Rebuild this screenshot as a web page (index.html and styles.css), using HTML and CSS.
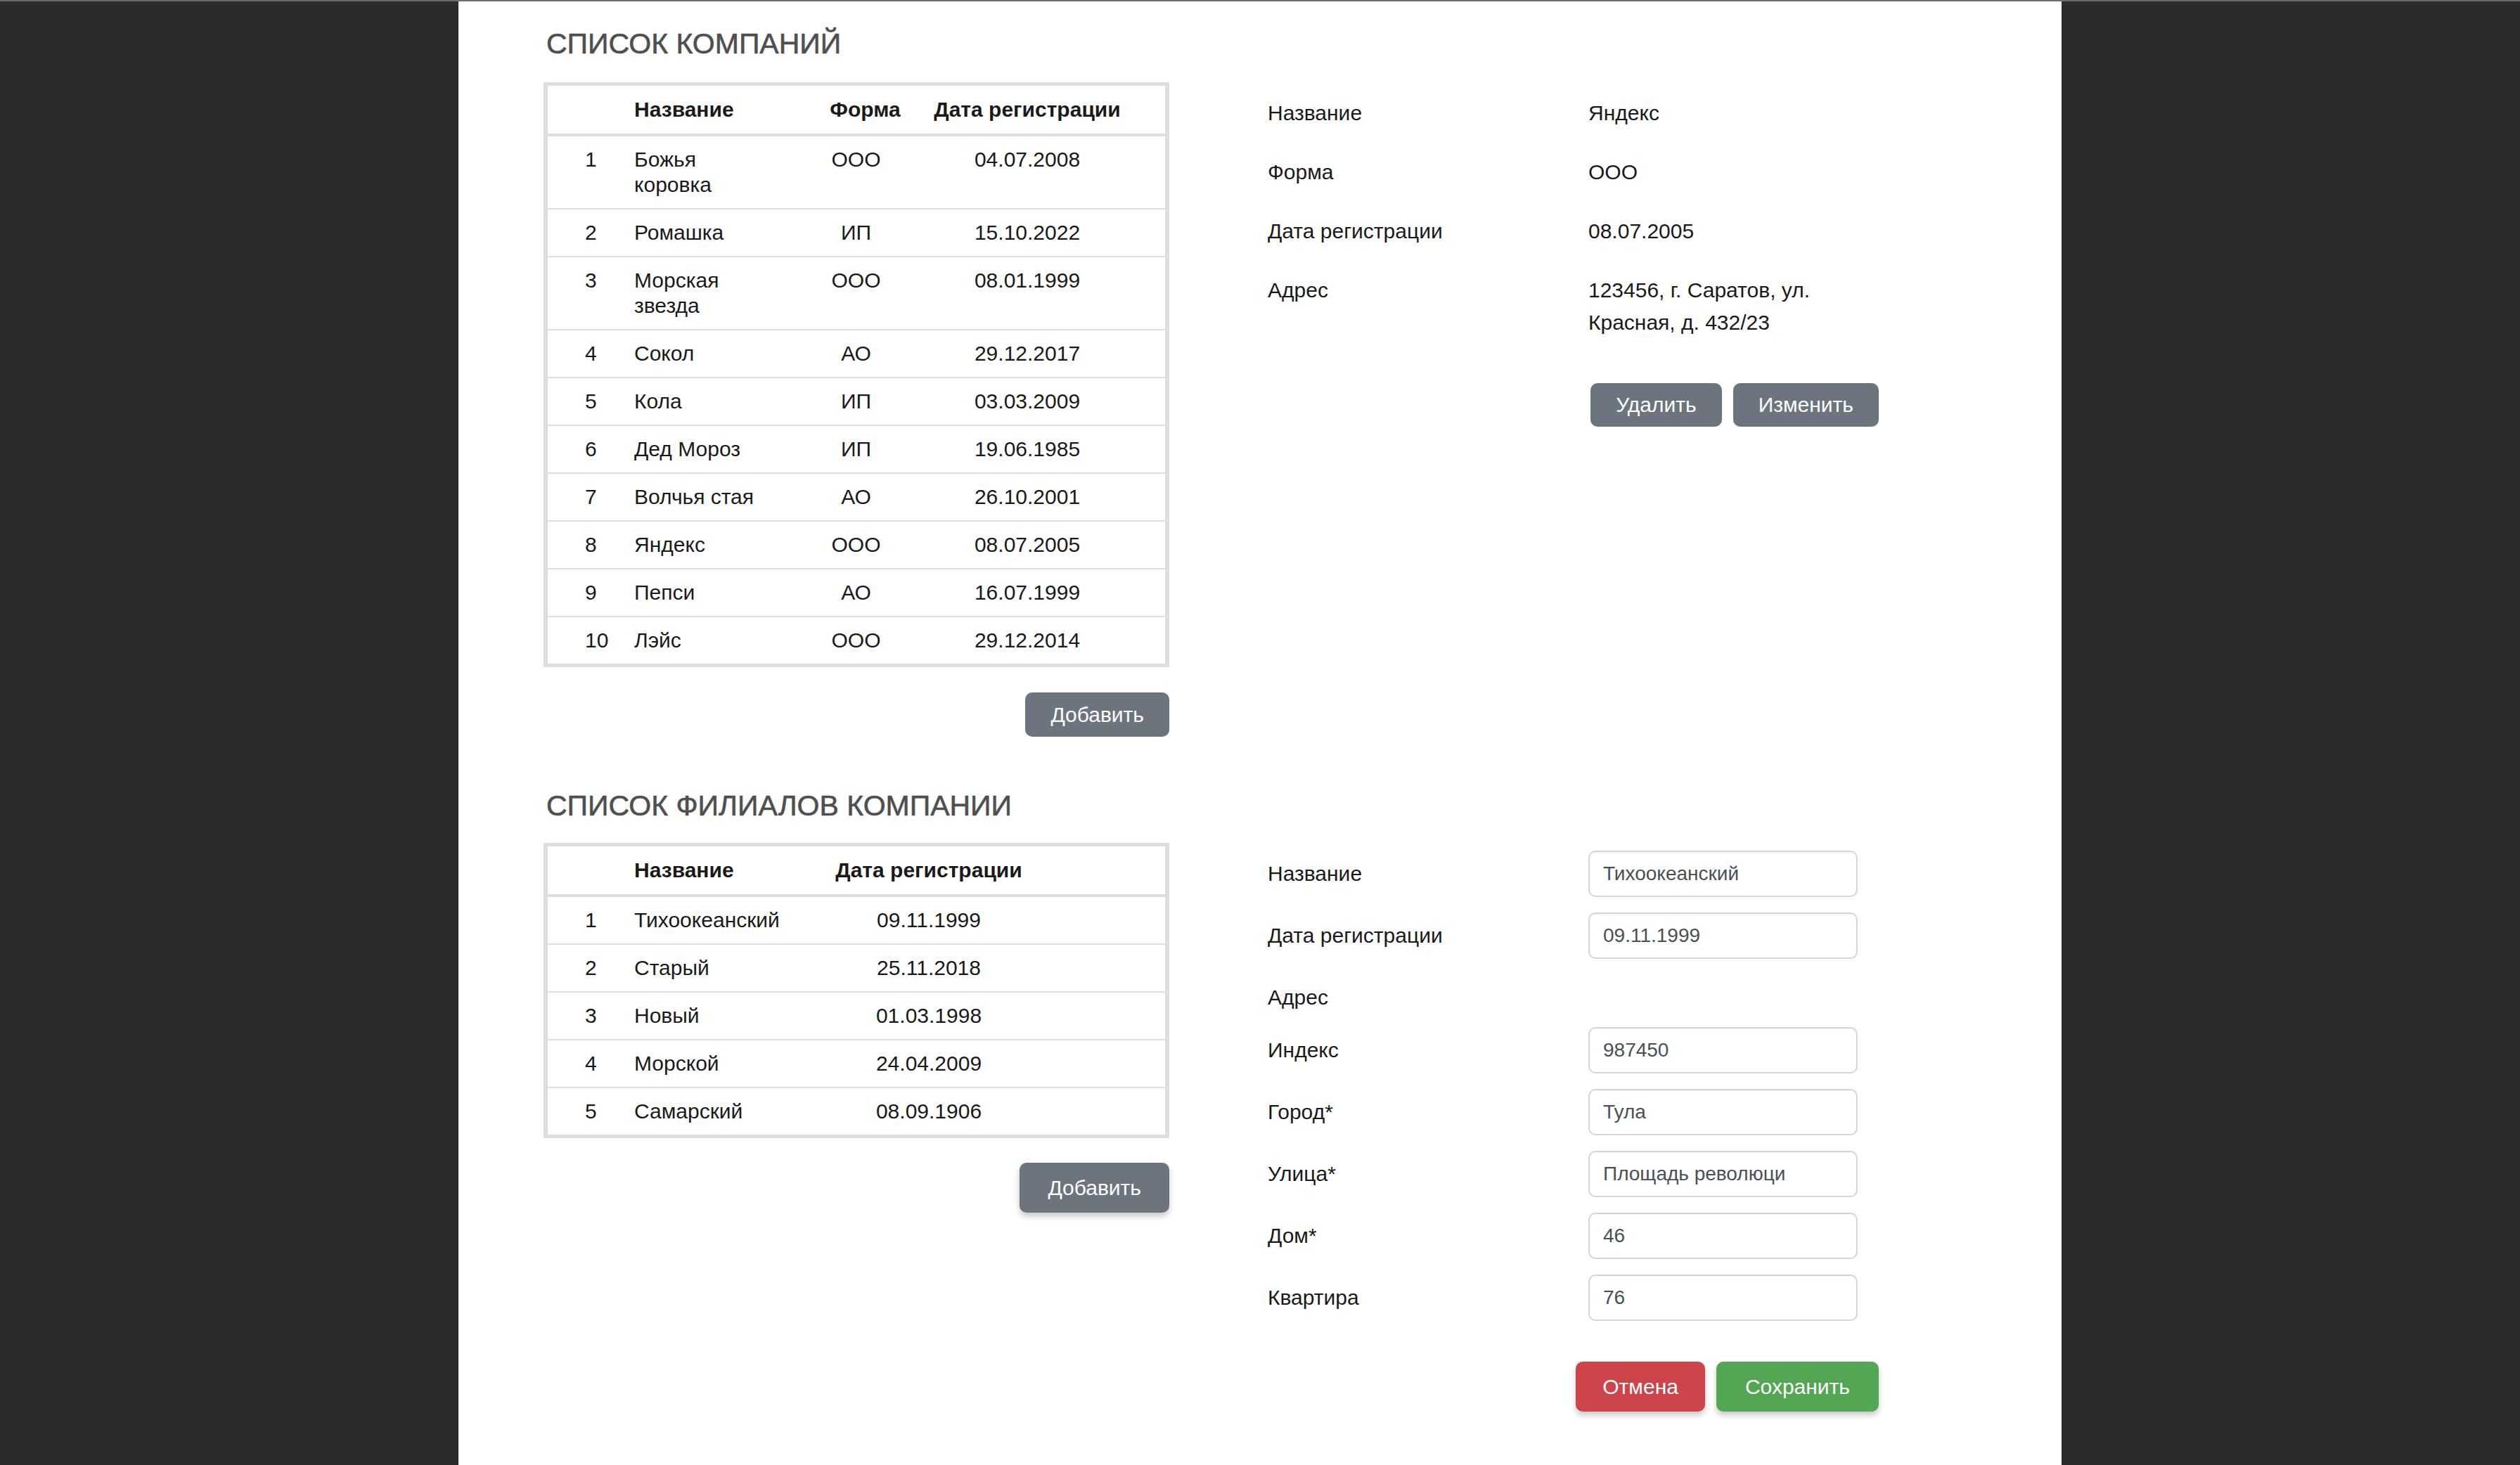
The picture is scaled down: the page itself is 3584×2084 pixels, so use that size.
FILE: index.html
```html
<!DOCTYPE html>
<html lang="ru">
<head>
<meta charset="utf-8">
<title>Список компаний</title>
<link rel="stylesheet" href="styles.css">
</head>
<body>
<div class="page">
  <h2 class="title">СПИСОК КОМПАНИЙ</h2>
  <div class="section">
    <div class="list">
      <table class="grid">
        <colgroup><col class="w-num"><col class="w-name"><col class="w-form"><col class="w-date1"></colgroup>
        <thead>
          <tr><th class="c-num"></th><th class="c-name">Название</th><th class="c-center c-formh">Форма</th><th class="c-center c-date1">Дата регистрации</th></tr>
        </thead>
        <tbody>
          <tr><td class="c-num">1</td><td class="c-name">Божья коровка</td><td class="c-center">ООО</td><td class="c-center c-date1">04.07.2008</td></tr>
          <tr><td class="c-num">2</td><td class="c-name">Ромашка</td><td class="c-center">ИП</td><td class="c-center c-date1">15.10.2022</td></tr>
          <tr><td class="c-num">3</td><td class="c-name">Морская звезда</td><td class="c-center">ООО</td><td class="c-center c-date1">08.01.1999</td></tr>
          <tr><td class="c-num">4</td><td class="c-name">Сокол</td><td class="c-center">АО</td><td class="c-center c-date1">29.12.2017</td></tr>
          <tr><td class="c-num">5</td><td class="c-name">Кола</td><td class="c-center">ИП</td><td class="c-center c-date1">03.03.2009</td></tr>
          <tr><td class="c-num">6</td><td class="c-name">Дед Мороз</td><td class="c-center">ИП</td><td class="c-center c-date1">19.06.1985</td></tr>
          <tr><td class="c-num">7</td><td class="c-name">Волчья стая</td><td class="c-center">АО</td><td class="c-center c-date1">26.10.2001</td></tr>
          <tr><td class="c-num">8</td><td class="c-name">Яндекс</td><td class="c-center">ООО</td><td class="c-center c-date1">08.07.2005</td></tr>
          <tr><td class="c-num">9</td><td class="c-name">Пепси</td><td class="c-center">АО</td><td class="c-center c-date1">16.07.1999</td></tr>
          <tr><td class="c-num">10</td><td class="c-name">Лэйс</td><td class="c-center">ООО</td><td class="c-center c-date1">29.12.2014</td></tr>
        </tbody>
      </table>
      <div class="list-actions list-actions-1">
        <button class="btn btn-add">Добавить</button>
      </div>
    </div>

    <div class="details">
      <div class="kv">
        <div class="k">Название</div><div class="v">Яндекс</div>
        <div class="k">Форма</div><div class="v">ООО</div>
        <div class="k">Дата регистрации</div><div class="v">08.07.2005</div>
        <div class="k">Адрес</div><div class="v">123456, г. Саратов, ул. Красная, д. 432/23</div>
      </div>
      <div class="actions">
        <button class="btn btn-del">Удалить</button>
        <button class="btn btn-edit">Изменить</button>
      </div>
    </div>
  </div>

  <h2 class="title title-2">СПИСОК ФИЛИАЛОВ КОМПАНИИ</h2>
  <div class="section">
    <div class="list">
      <table class="grid">
        <colgroup><col class="w-num"><col class="w-name2"><col class="w-date2"><col class="w-rest2"></colgroup>
        <thead>
          <tr><th class="c-num"></th><th class="c-name">Название</th><th class="c-center">Дата регистрации</th><th></th></tr>
        </thead>
        <tbody>
          <tr><td class="c-num">1</td><td class="c-name">Тихоокеанский</td><td class="c-center">09.11.1999</td><td></td></tr>
          <tr><td class="c-num">2</td><td class="c-name">Старый</td><td class="c-center">25.11.2018</td><td></td></tr>
          <tr><td class="c-num">3</td><td class="c-name">Новый</td><td class="c-center">01.03.1998</td><td></td></tr>
          <tr><td class="c-num">4</td><td class="c-name">Морской</td><td class="c-center">24.04.2009</td><td></td></tr>
          <tr><td class="c-num">5</td><td class="c-name">Самарский</td><td class="c-center">08.09.1906</td><td></td></tr>
        </tbody>
      </table>
      <div class="list-actions list-actions-2">
        <button class="btn btn-lg btn-add2">Добавить</button>
      </div>
    </div>

    <form class="form">
      <div class="frow"><label class="k">Название</label><input class="input" type="text" value="Тихоокеанский"></div>
      <div class="frow"><label class="k">Дата регистрации</label><input class="input" type="text" value="09.11.1999"></div>
      <div class="frow addr"><span class="k">Адрес</span></div>
      <div class="frow"><label class="k">Индекс</label><input class="input" type="text" value="987450"></div>
      <div class="frow"><label class="k">Город*</label><input class="input" type="text" value="Тула"></div>
      <div class="frow"><label class="k">Улица*</label><input class="input" type="text" value="Площадь революци"></div>
      <div class="frow"><label class="k">Дом*</label><input class="input" type="text" value="46"></div>
      <div class="frow"><label class="k">Квартира</label><input class="input" type="text" value="76"></div>
      <div class="form-actions">
        <button type="button" class="btn btn-lg btn-cancel">Отмена</button>
        <button type="button" class="btn btn-lg btn-save">Сохранить</button>
      </div>
    </form>
  </div>
</div>
</body>
</html>
```

FILE: styles.css
```css
* { box-sizing: border-box; }

html, body { margin: 0; padding: 0; }

body {
  background: #2c2b29;
  border-top: 2px solid #6b6b6b;
  font-family: "Liberation Sans", Arial, Helvetica, sans-serif;
  color: #212529;
}

.page {
  width: 2280px;
  min-height: 2082px;
  margin: 0 auto;
  background: #ffffff;
  padding: 36px 0 0 121px;
}

.title {
  margin: 0 0 31px 4px;
  font-size: 41px;
  line-height: 48px;
  font-weight: normal;
  color: #4f4f4f;
  -webkit-text-stroke: 0.6px #4f4f4f;
}

.title-2 {
  margin-top: 74px;
  margin-bottom: 29px;
}

.section {
  display: flex;
  align-items: flex-start;
  gap: 140px;
}

.list { width: 890px; }

.grid {
  width: 890px;
  table-layout: fixed;
  border-collapse: separate;
  border-spacing: 0;
  border-style: solid;
  border-color: #dedede;
  border-width: 5px 6px;
  font-size: 30px;
  line-height: 36px;
  color: #1a1a1a;
}

.w-num { width: 101px; }
.w-name { width: 245px; }
.w-form { width: 185px; }
.w-date1 { width: 347px; }
.w-name2 { width: 300px; }
.w-date2 { width: 282px; }
.w-rest2 { width: 195px; }

.grid th {
  font-weight: bold;
  text-align: left;
  padding: 16px 20px 16px 0;
  border-bottom: 4px solid #dedede;
}

.grid td {
  padding: 15px 20px 15px 0;
  vertical-align: top;
}

.grid tbody tr + tr td { border-top: 2px solid #dedede; }

.grid .c-num { padding-left: 53px; padding-right: 0; }
.grid .c-name { padding-left: 22px; }
.grid .c-center { text-align: center; padding-left: 0; padding-right: 0; }
.grid .c-formh { padding-left: 26px; }
.grid .c-date1 { padding-right: 45px; }

.list-actions {
  display: flex;
  justify-content: flex-end;
}
.list-actions-1 { margin-top: 36px; }
.list-actions-2 { margin-top: 35px; }

.btn {
  display: inline-flex;
  align-items: center;
  justify-content: center;
  height: 62px;
  padding: 0 36px;
  border: none;
  border-radius: 10px;
  background: #6c757d;
  color: #ffffff;
  font-family: "Liberation Sans", Arial, Helvetica, sans-serif;
  font-size: 30px;
  line-height: 36px;
  cursor: pointer;
}

.btn-add { height: 63px; padding: 0 36px; }

.btn-lg {
  height: 71px;
  padding: 0 39px;
  box-shadow: 0 5px 9px rgba(0, 0, 0, 0.22);
}

.btn-add2 { padding: 0 40px; }
.btn-cancel { background: #cd444b; padding: 0 38px; }
.btn-save { background: #53a653; padding: 0 41px; }

.details {
  width: 869px;
  padding-top: 21px;
  font-size: 30px;
  line-height: 46px;
  color: #1a1a1a;
}

.kv {
  display: grid;
  grid-template-columns: 456px 413px;
  row-gap: 38px;
}

.actions {
  display: flex;
  justify-content: flex-end;
  gap: 16px;
  margin-top: 63px;
}

.form {
  width: 869px;
  margin: 0;
  padding-top: 11px;
  display: flex;
  flex-direction: column;
  gap: 22px;
  font-size: 30px;
  line-height: 46px;
  color: #1a1a1a;
}

.frow {
  display: grid;
  grid-template-columns: 456px 383px;
  align-items: center;
  height: 66px;
}

.frow.addr {
  height: 46px;
  margin-top: 10px;
  margin-bottom: -3px;
}

.input {
  width: 383px;
  height: 66px;
  border: 2px solid #d3d7dc;
  border-radius: 10px;
  padding: 0 19px;
  font-family: "Liberation Sans", Arial, Helvetica, sans-serif;
  font-size: 28px;
  color: #495057;
  background: #ffffff;
  box-shadow: inset 0 1px 2px rgba(0, 0, 0, 0.06);
  outline: none;
}

.form-actions {
  display: flex;
  justify-content: flex-end;
  gap: 16px;
  margin-top: 36px;
}
```
